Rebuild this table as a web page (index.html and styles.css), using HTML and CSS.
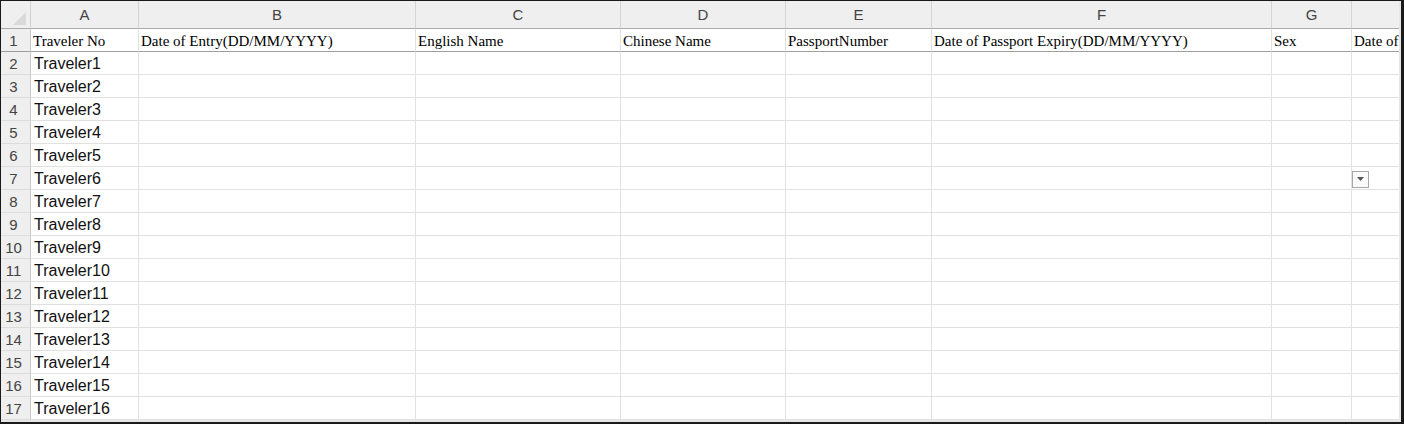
FILE: index.html
```html
<!DOCTYPE html>
<html>
<head>
<meta charset="utf-8">
<link rel="stylesheet" href="styles.css">
</head>
<body>
<div class="frame">
  <div class="sheet">
    <div class="corner"><span class="tri"></span></div>
    <div class="ch">A</div><div class="ch">B</div><div class="ch">C</div><div class="ch">D</div><div class="ch">E</div><div class="ch">F</div><div class="ch">G</div><div class="ch last"></div>

    <div class="rh fr">1</div>
    <div class="c hd fr">Traveler No</div>
    <div class="c hd fr">Date of Entry(DD/MM/YYYY)</div>
    <div class="c hd fr">English Name</div>
    <div class="c hd fr">Chinese Name</div>
    <div class="c hd fr">PassportNumber</div>
    <div class="c hd fr">Date of Passport Expiry(DD/MM/YYYY)</div>
    <div class="c hd fr">Sex</div>
    <div class="c hd fr last">Date of</div>

    <div class="rh">2</div><div class="c t">Traveler1</div><div class="c"></div><div class="c"></div><div class="c"></div><div class="c"></div><div class="c"></div><div class="c"></div><div class="c last"></div>
    <div class="rh">3</div><div class="c t">Traveler2</div><div class="c"></div><div class="c"></div><div class="c"></div><div class="c"></div><div class="c"></div><div class="c"></div><div class="c last"></div>
    <div class="rh">4</div><div class="c t">Traveler3</div><div class="c"></div><div class="c"></div><div class="c"></div><div class="c"></div><div class="c"></div><div class="c"></div><div class="c last"></div>
    <div class="rh">5</div><div class="c t">Traveler4</div><div class="c"></div><div class="c"></div><div class="c"></div><div class="c"></div><div class="c"></div><div class="c"></div><div class="c last"></div>
    <div class="rh">6</div><div class="c t">Traveler5</div><div class="c"></div><div class="c"></div><div class="c"></div><div class="c"></div><div class="c"></div><div class="c"></div><div class="c last"></div>
    <div class="rh">7</div><div class="c t">Traveler6</div><div class="c"></div><div class="c"></div><div class="c"></div><div class="c"></div><div class="c"></div><div class="c"></div><div class="c last sel"><span class="dd"><svg width="7" height="4" viewBox="0 0 7 4"><path d="M0 0h7L3.5 4z" fill="#555"/></svg></span></div>
    <div class="rh">8</div><div class="c t">Traveler7</div><div class="c"></div><div class="c"></div><div class="c"></div><div class="c"></div><div class="c"></div><div class="c"></div><div class="c last"></div>
    <div class="rh">9</div><div class="c t">Traveler8</div><div class="c"></div><div class="c"></div><div class="c"></div><div class="c"></div><div class="c"></div><div class="c"></div><div class="c last"></div>
    <div class="rh">10</div><div class="c t">Traveler9</div><div class="c"></div><div class="c"></div><div class="c"></div><div class="c"></div><div class="c"></div><div class="c"></div><div class="c last"></div>
    <div class="rh">11</div><div class="c t">Traveler10</div><div class="c"></div><div class="c"></div><div class="c"></div><div class="c"></div><div class="c"></div><div class="c"></div><div class="c last"></div>
    <div class="rh">12</div><div class="c t">Traveler11</div><div class="c"></div><div class="c"></div><div class="c"></div><div class="c"></div><div class="c"></div><div class="c"></div><div class="c last"></div>
    <div class="rh">13</div><div class="c t">Traveler12</div><div class="c"></div><div class="c"></div><div class="c"></div><div class="c"></div><div class="c"></div><div class="c"></div><div class="c last"></div>
    <div class="rh">14</div><div class="c t">Traveler13</div><div class="c"></div><div class="c"></div><div class="c"></div><div class="c"></div><div class="c"></div><div class="c"></div><div class="c last"></div>
    <div class="rh">15</div><div class="c t">Traveler14</div><div class="c"></div><div class="c"></div><div class="c"></div><div class="c"></div><div class="c"></div><div class="c"></div><div class="c last"></div>
    <div class="rh">16</div><div class="c t">Traveler15</div><div class="c"></div><div class="c"></div><div class="c"></div><div class="c"></div><div class="c"></div><div class="c"></div><div class="c last"></div>
    <div class="rh">17</div><div class="c t">Traveler16</div><div class="c"></div><div class="c"></div><div class="c"></div><div class="c"></div><div class="c"></div><div class="c"></div><div class="c last"></div>
  </div>
</div>
</body>
</html>
```

FILE: styles.css
```css
html, body {
  margin: 0;
  padding: 0;
  background: #fff;
}
.frame {
  box-sizing: border-box;
  width: 1404px;
  height: 424px;
  border-top: 1px solid #1a1a1a;
  border-left: 1px solid #1a1a1a;
  border-right: 3px solid #1a1a1a;
  border-bottom: 2px solid #1a1a1a;
  background: #e6e6e6;
  overflow: hidden;
}
.sheet {
  display: grid;
  grid-template-columns: 30px 108px 277px 205px 165px 146px 340px 80px 48px;
  grid-template-rows: 28px 23px repeat(16, 23px);
  width: 1398px;
  overflow: hidden;
  background: #fff;
}
.sheet > div {
  box-sizing: border-box;
  min-width: 0;
  overflow: hidden;
  white-space: nowrap;
}
.corner {
  background: #efefef;
  border-right: 1px solid #d0d0d0;
  border-bottom: 1px solid #ababab;
  position: relative;
}
.tri {
  position: absolute;
  right: 4px;
  bottom: 3px;
  width: 0;
  height: 0;
  border-left: 13px solid transparent;
  border-bottom: 13px solid #dadada;
}
.ch {
  background: #efefef;
  border-right: 1px solid #d4d4d4;
  border-bottom: 1px solid #ababab;
  color: #444;
  font-family: "Liberation Sans", Arial, sans-serif;
  font-size: 15px;
  line-height: 27px;
  text-align: center;
}
.rh {
  background: #efefef;
  border-right: 1px solid #c8c8c8;
  border-bottom: 1px solid #dcdcdc;
  color: #444;
  font-family: "Liberation Sans", Arial, sans-serif;
  font-size: 15px;
  line-height: 23px;
  text-align: center;
  padding-right: 4px;
}
.c {
  border-right: 1px solid #e1e1e1;
  border-bottom: 1px solid #e1e1e1;
}
.last {
  border-right: none;
}
.fr {
  border-bottom: 1px solid #9e9e9e;
}
.hd {
  font-family: "Liberation Serif", "Times New Roman", serif;
  font-size: 15px;
  color: #000;
  line-height: 25px;
  padding-left: 2px;
}
.t {
  font-family: "Liberation Sans", Arial, sans-serif;
  font-size: 16px;
  color: #111;
  line-height: 23px;
  padding-left: 3px;
}
.sel {
  position: relative;
}
.dd {
  position: absolute;
  left: 0;
  top: 4px;
  box-sizing: border-box;
  width: 17px;
  height: 17px;
  border: 1px solid #a8a8a8;
  background: #fafafa;
  display: flex;
  align-items: flex-start;
  justify-content: center;
  padding-top: 5px;
}
.dd svg {
  display: block;
}
```
